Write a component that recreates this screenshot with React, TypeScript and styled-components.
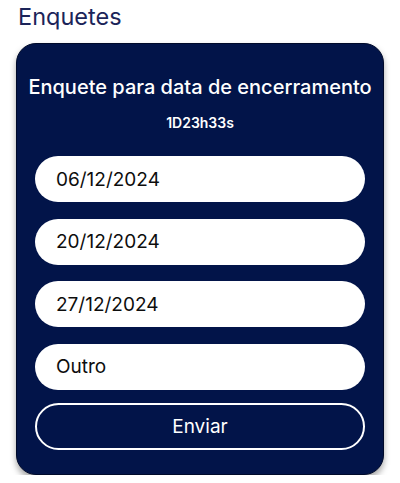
import React from "react";
import styled, { createGlobalStyle } from "styled-components";

const Global = createGlobalStyle`
  body { margin: 0; background: #ffffff; font-family: Inter, "Noto Sans", sans-serif; }
`;

const Page = styled.div`
  padding: 2px 16px 0 16px;
  width: 400px;
  box-sizing: border-box;
`;

const Heading = styled.h1`
  margin: 0 0 12px 2px;
  font-size: 23.5px;
  font-weight: 400;
  color: #1b2459;
  line-height: 29px;
`;

const Card = styled.div`
  width: 368px;
  box-sizing: border-box;
  background: #021449;
  border: 1px solid #000a2a;
  border-radius: 20px;
  box-shadow: 0 4px 6px rgba(0, 0, 0, 0.35);
  padding: 30px 18px 24px 18px;
  display: flex;
  flex-direction: column;
  align-items: center;
`;

const CardTitle = styled.div`
  color: #ffffff;
  font-size: 20px;
  font-weight: 500;
  line-height: 26px;
  white-space: nowrap;
`;

const Timer = styled.div`
  color: #ffffff;
  font-size: 14px;
  font-weight: 600;
  line-height: 16px;
  margin-top: 15px;
  margin-bottom: 25px;
`;

const Options = styled.div`
  width: 100%;
  display: flex;
  flex-direction: column;
  gap: 16.5px;
`;

const Option = styled.div`
  height: 46px;
  border-radius: 23px;
  background: #ffffff;
  display: flex;
  align-items: center;
  padding-left: 21px;
  font-size: 19px;
  color: #0d0d0d;
`;

const SubmitButton = styled.button`
  margin-top: 13px;
  width: 100%;
  height: 47px;
  border-radius: 23.5px;
  border: 2px solid #ffffff;
  background: transparent;
  color: #ffffff;
  font-family: Inter, "Noto Sans", sans-serif;
  font-size: 19px;
  font-weight: 400;
`;

const options = ["06/12/2024", "20/12/2024", "27/12/2024", "Outro"];

export default function App() {
  return (
    <>
      <Global />
      <Page>
        <Heading>Enquetes</Heading>
        <Card>
          <CardTitle>Enquete para data de encerramento</CardTitle>
          <Timer>1D23h33s</Timer>
          <Options>
            {options.map((o) => (
              <Option key={o}>{o}</Option>
            ))}
          </Options>
          <SubmitButton>Enviar</SubmitButton>
        </Card>
      </Page>
    </>
  );
}
